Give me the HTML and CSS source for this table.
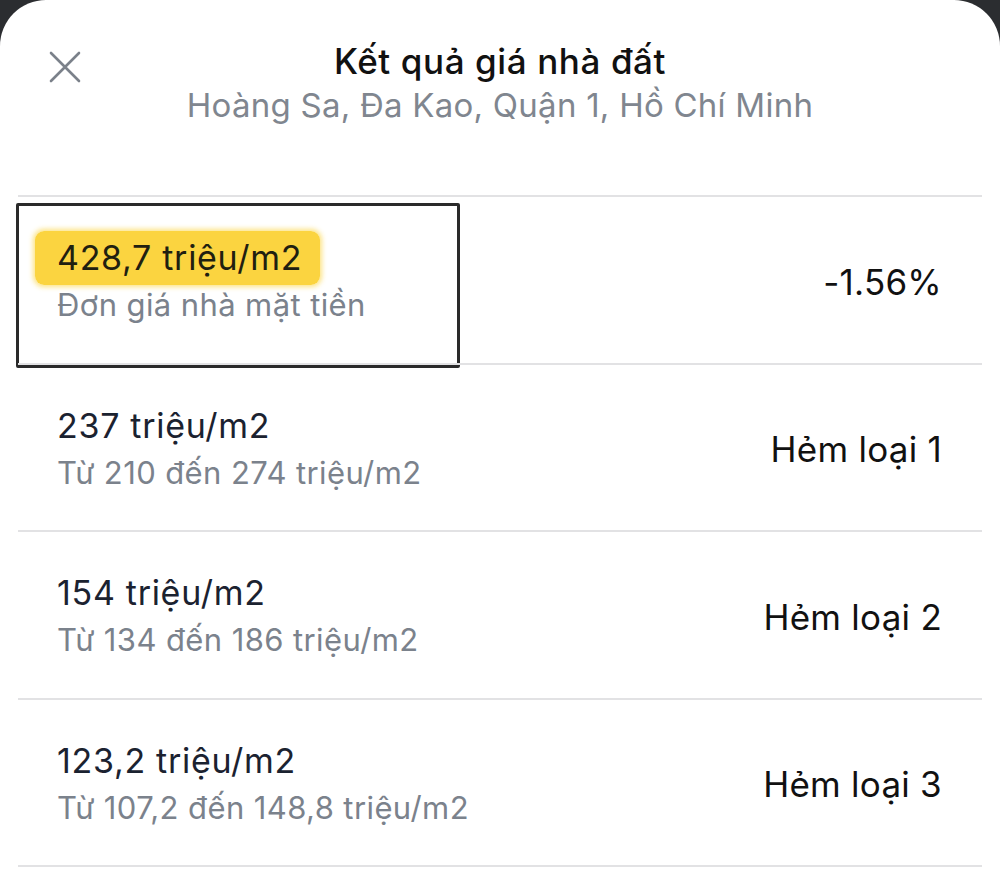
FILE: index.html
```html
<!DOCTYPE html>
<html lang="vi">
<head>
<meta charset="utf-8">
<link rel="stylesheet" href="styles.css">
</head>
<body>
<div class="sheet">
  <header class="header">
    <button class="close" aria-label="Đóng">
      <svg width="34" height="34" viewBox="0 0 34 34"><path d="M3 3 L31 31 M31 3 L3 31" stroke="#7b818a" stroke-width="2.6" stroke-linecap="round" fill="none"/></svg>
    </button>
    <div class="titles">
      <h1 class="title">Kết quả giá nhà đất</h1>
      <p class="subtitle">Hoàng Sa, Đa Kao, Quận 1, Hồ Chí Minh</p>
    </div>
  </header>
  <ul class="list">
    <li class="row">
      <div class="left">
        <span class="main"><span class="marked">428,7 triệu/m2</span></span>
        <span class="sub">Đơn giá nhà mặt tiền</span>
      </div>
      <span class="right">-1.56%</span>
      <span class="frame"></span>
    </li>
    <li class="row">
      <div class="left">
        <span class="main">237 triệu/m2</span>
        <span class="sub">Từ 210 đến 274 triệu/m2</span>
      </div>
      <span class="right">Hẻm loại 1</span>
    </li>
    <li class="row">
      <div class="left">
        <span class="main">154 triệu/m2</span>
        <span class="sub">Từ 134 đến 186 triệu/m2</span>
      </div>
      <span class="right">Hẻm loại 2</span>
    </li>
    <li class="row">
      <div class="left">
        <span class="main">123,2 triệu/m2</span>
        <span class="sub">Từ 107,2 đến 148,8 triệu/m2</span>
      </div>
      <span class="right">Hẻm loại 3</span>
    </li>
  </ul>
</div>
</body>
</html>
```
FILE: styles.css
```css
* { box-sizing: border-box; }
html, body { margin: 0; padding: 0; }
body {
  background: #2b2d30;
  font-family: Inter, "Noto Sans", "Liberation Sans", sans-serif;
  width: 1000px;
  height: 894px;
  overflow: hidden;
}
.sheet {
  background: #ffffff;
  height: 894px;
  border-radius: 46px 46px 0 0;
  padding-top: 37px;
}
.header {
  display: grid;
  grid-template-columns: 1fr auto 1fr;
  align-items: start;
  height: 158px;
}
.close {
  border: 0;
  background: none;
  padding: 0;
  margin: 13px 0 0 48px;
  width: 34px;
  height: 34px;
  justify-self: start;
}
.titles { text-align: center; }
.title {
  margin: 0;
  font-size: 35px;
  font-weight: 500;
  letter-spacing: 0.6px;
  color: #111111;
  line-height: 48px;
}
.subtitle {
  margin: 0;
  font-size: 33px;
  letter-spacing: 0.25px;
  color: #80868f;
  line-height: 40px;
}
.list {
  list-style: none;
  margin: 0 18px;
  padding: 0;
  border-bottom: 2px solid #e2e2e4;
}
.row {
  position: relative;
  display: flex;
  align-items: center;
  justify-content: space-between;
  height: 167.5px;
  padding: 4px 40px 0 39px;
  border-top: 2px solid #e2e2e4;
}
.left {
  display: flex;
  flex-direction: column;
  align-items: flex-start;
}
.main {
  font-size: 34px;
  line-height: 44px;
  letter-spacing: 0.7px;
  color: #1b2230;
}
.sub {
  font-size: 31px;
  line-height: 44px;
  margin-top: 3px;
  letter-spacing: 0.4px;
  color: #7b828c;
}
.marked {
  background: #fbd440;
  border-radius: 9px;
  padding: 6px 18px 7px 22px;
  margin-left: -22px;
  box-shadow: 0 0 5px 2px rgba(251, 212, 64, 0.65);
  color: #1f2010;
}
.right {
  font-size: 35px;
  letter-spacing: 0.25px;
  color: #111111;
}
.frame {
  position: absolute;
  left: -2px;
  top: 6px;
  width: 444px;
  height: 165px;
  border: 3px solid #2a2a2a;
  border-radius: 2px;
  pointer-events: none;
}
```
